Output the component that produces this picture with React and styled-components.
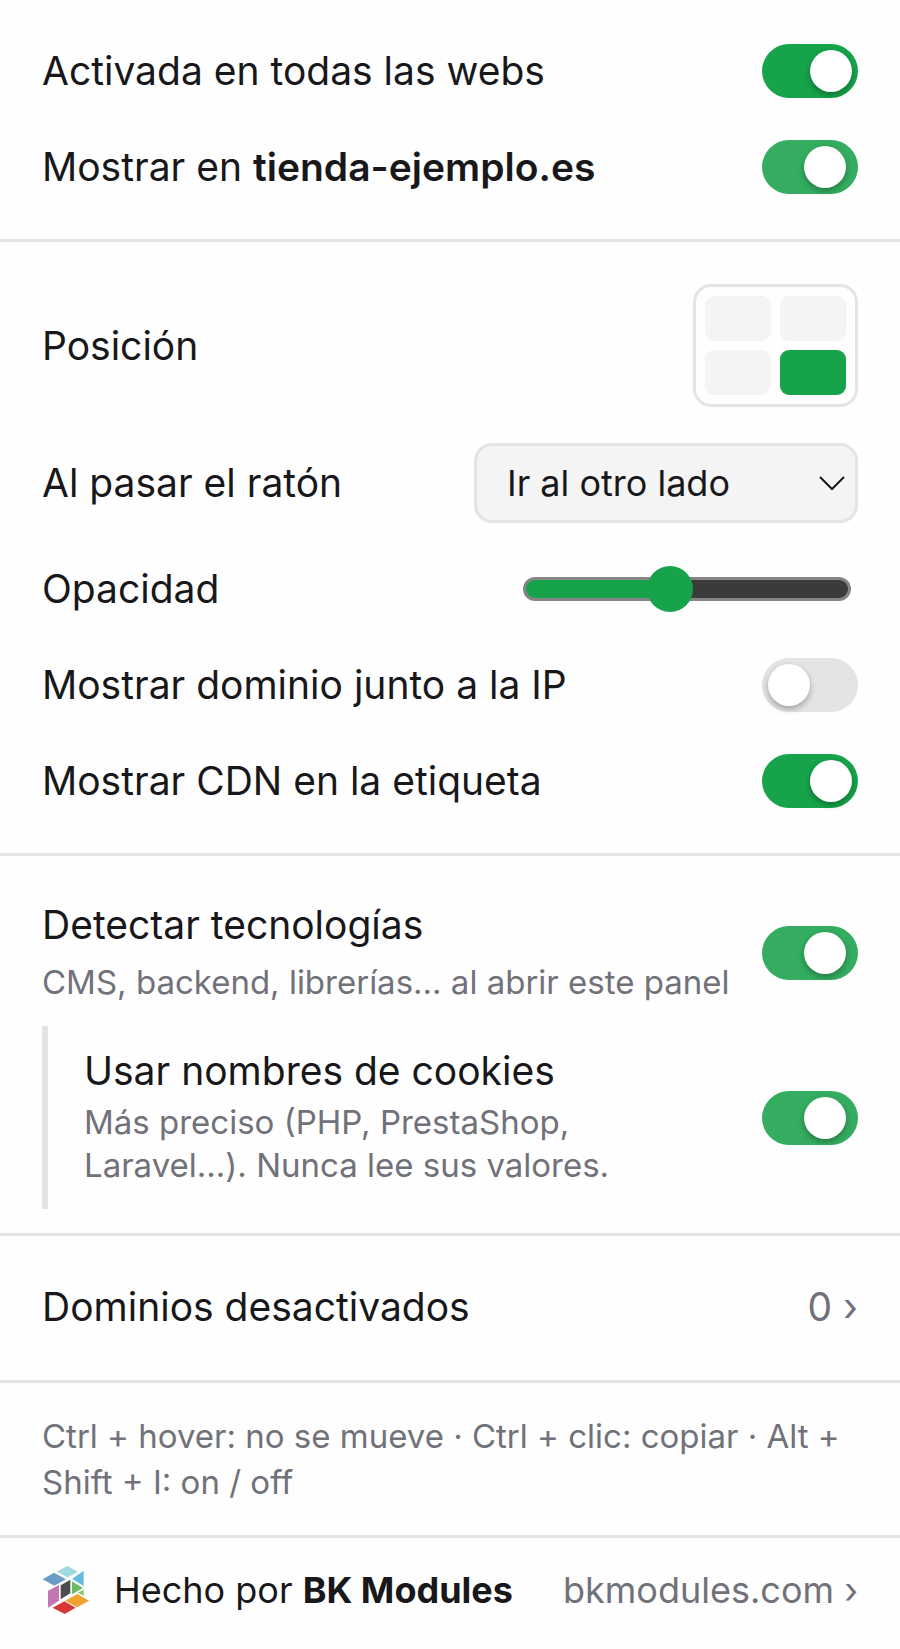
import React, { useState } from "react";
import styled, { createGlobalStyle } from "styled-components";

const App = () => {
  const [corner, setCorner] = useState("bottom-right");
  const [opacity, setOpacity] = useState(55);

  return (
    <Panel>
      <GlobalStyle />

      <Section>
        <Row>
          <Label htmlFor="enabled">Activada en todas las webs</Label>
          <Toggle id="enabled" defaultChecked />
        </Row>
        <Row>
          <Label htmlFor="site">
            Mostrar en <strong>tienda-ejemplo.es</strong>
          </Label>
          <Toggle id="site" defaultChecked $settling />
        </Row>
      </Section>

      <Section>
        <Row>
          <Label as="span" id="position-label">Posición</Label>
          <PositionGrid role="group" aria-labelledby="position-label">
            {corners.map(({ id, name }) => (
              <Corner
                key={id}
                type="button"
                aria-label={name}
                aria-pressed={corner === id}
                onClick={() => setCorner(id)}
              />
            ))}
          </PositionGrid>
        </Row>
        <Row>
          <Label htmlFor="hover">Al pasar el ratón</Label>
          <SelectBox>
            <Select id="hover" defaultValue="move">
              <option value="move">Ir al otro lado</option>
            </Select>
            <Chevron viewBox="0 0 26 16" aria-hidden="true">
              <path d="M1 2 L13 14 L25 2" />
            </Chevron>
          </SelectBox>
        </Row>
        <Row>
          <Label htmlFor="opacity">Opacidad</Label>
          <Slider
            id="opacity"
            type="range"
            min="20"
            max="100"
            value={opacity}
            onChange={(e) => setOpacity(Number(e.target.value))}
            style={{ "--fill": `${((opacity - 20) / 80) * 100}%` }}
          />
        </Row>
        <Row>
          <Label htmlFor="domain">Mostrar dominio junto a la IP</Label>
          <Toggle id="domain" />
        </Row>
        <Row>
          <Label htmlFor="cdn">Mostrar CDN en la etiqueta</Label>
          <Toggle id="cdn" defaultChecked />
        </Row>
      </Section>

      <Section>
        <Row>
          <Label htmlFor="tech">
            Detectar tecnologías
            <Hint>CMS, backend, librerías... al abrir este panel</Hint>
          </Label>
          <Toggle id="tech" defaultChecked $settling />
        </Row>
        <NestedRow>
          <Label htmlFor="cookies">
            Usar nombres de cookies
            <NestedHint>
              Más preciso (PHP, PrestaShop, Laravel...). Nunca lee sus valores.
            </NestedHint>
          </Label>
          <Toggle id="cookies" defaultChecked $settling />
        </NestedRow>
      </Section>

      <DomainsButton type="button">
        <span>Dominios desactivados</span>
        <Muted>0 ›</Muted>
      </DomainsButton>

      <Shortcuts>
        Ctrl + hover: no se mueve · Ctrl + clic: copiar · Alt + Shift + I: on / off
      </Shortcuts>

      <Footer href="#bkmodules">
        <Logo />
        <Credit>
          Hecho por <strong>BK Modules</strong>
        </Credit>
        <Muted>bkmodules.com ›</Muted>
      </Footer>
    </Panel>
  );
};

const corners = [
  { id: "top-left", name: "Arriba a la izquierda" },
  { id: "top-right", name: "Arriba a la derecha" },
  { id: "bottom-left", name: "Abajo a la izquierda" },
  { id: "bottom-right", name: "Abajo a la derecha" },
];

const Logo = () => (
  <LogoSvg viewBox="66 48 144 144" aria-hidden="true">
    <path fill="#9fd8df" d="M110 65 142 48 174 65 143 82Z" />
    <path fill="#6a9cc6" d="M68 88 102 68 138 88 103 107Z" />
    <path fill="#64bbe0" d="M191 62V108L156 87Z" />
    <path fill="#4d4d4d" d="M122 106 151 89V130L122 148Z" />
    <path fill="#6dbb63" d="M156 94 189 114 156 133Z" />
    <path fill="#8cc56f" d="M191 119V137L173 128Z" />
    <path fill="#c277b1" d="M84 122 117 105V152L84 173Z" />
    <path fill="#f0a22f" d="M136 152 172 132 207 152 171 172Z" />
    <path fill="#d93636" d="M98 173 133 154 167 173 134 192Z" />
  </LogoSvg>
);

const GlobalStyle = createGlobalStyle`
  *, *::before {
    box-sizing: border-box;
  }

  body {
    margin: 0;
    background-color: #fefefe;
    color: #18181b;
    font-family: Inter, "Liberation Sans", sans-serif;
    font-size: 39px;
    line-height: 54px;
  }

  strong {
    font-weight: 600;
  }
`;

const Panel = styled.main`
  display: flex;
  flex-direction: column;
`;

const Section = styled.section`
  padding: 24px 42px;
  border-bottom: 3px solid #e4e4e4;

  &:first-of-type {
    padding-top: 23px;
  }
`;

const Row = styled.div`
  display: flex;
  align-items: center;
  justify-content: space-between;
  gap: 32px;
  min-height: 96px;
  padding: 18px 0;
`;

const NestedRow = styled(Row)`
  padding-left: 36px;
  border-left: 6px solid #e4e4e4;
`;

const Label = styled.label`
  min-width: 0;
`;

const Hint = styled.small`
  display: block;
  margin-top: 4px;
  font-size: 33px;
  line-height: 52px;
  color: #71717a;
`;

const NestedHint = styled(Hint)`
  margin: 3px 0 4px;
  line-height: 43px;
`;

const Toggle = styled.input.attrs({ type: "checkbox", role: "switch" })`
  appearance: none;
  flex-shrink: 0;
  display: flex;
  width: 96px;
  height: 54px;
  margin: 0;
  padding: 6px;
  border-radius: 27px;
  background-color: #e4e4e7;
  cursor: pointer;

  &::before {
    content: "";
    width: 42px;
    height: 42px;
    border-radius: 50%;
    background-color: #fff;
    box-shadow: 0 3px 6px rgba(0, 0, 0, 0.3);
  }

  &:checked {
    justify-content: flex-end;
    padding-right: ${(props) => (props.$settling ? "12px" : "6px")};
    background-color: ${(props) => (props.$settling ? "#34ad60" : "#16a34a")};
  }
`;

const PositionGrid = styled.div`
  display: grid;
  grid-template-columns: 66px 66px;
  grid-auto-rows: 45px;
  gap: 9px;
  padding: 9px;
  border: 3px solid #e4e4e4;
  border-radius: 18px;
`;

const Corner = styled.button`
  padding: 0;
  border: none;
  border-radius: 9px;
  background-color: #f4f4f4;
  cursor: pointer;

  &[aria-pressed="true"] {
    background-color: #16a34a;
  }
`;

const SelectBox = styled.div`
  position: relative;
  width: 384px;
`;

const Select = styled.select`
  appearance: none;
  display: block;
  width: 100%;
  height: 80px;
  padding: 0 60px 0 30px;
  border: 3px solid #e4e4e4;
  border-radius: 18px;
  background-color: #f4f4f4;
  color: inherit;
  font-family: inherit;
  font-size: 36px;
`;

const Chevron = styled.svg`
  position: absolute;
  top: 32px;
  right: 13px;
  width: 26px;
  height: 16px;
  fill: none;
  stroke: #18181b;
  stroke-width: 2;
  pointer-events: none;
`;

const Slider = styled.input`
  appearance: none;
  width: 328px;
  height: 24px;
  margin: 0 7px;
  border: 3px solid #858585;
  border-radius: 12px;
  background: linear-gradient(to right, #16a34a var(--fill), #3b3b3b var(--fill));

  &::-webkit-slider-thumb {
    appearance: none;
    width: 46px;
    height: 46px;
    border-radius: 50%;
    background-color: #16a34a;
  }
`;

const DomainsButton = styled.button`
  display: flex;
  align-items: center;
  justify-content: space-between;
  padding: 44px 42px 46px;
  border: none;
  border-bottom: 3px solid #e4e4e4;
  background: none;
  color: inherit;
  font: inherit;
  text-align: left;
  cursor: pointer;
`;

const Muted = styled.span`
  color: #71717a;
`;

const Shortcuts = styled.p`
  margin: 0;
  padding: 30px 42px;
  border-bottom: 3px solid #e4e4e4;
  font-size: 33px;
  line-height: 46px;
  color: #71717a;
`;

const Footer = styled.a`
  display: flex;
  align-items: center;
  padding: 25px 42px;
  color: inherit;
  font-size: 36px;
  text-decoration: none;
`;

const LogoSvg = styled.svg`
  flex-shrink: 0;
  width: 48px;
  height: 48px;
  margin-right: 24px;
`;

const Credit = styled.span`
  flex: 1;

  strong {
    font-weight: 700;
  }
`;

export default App;
